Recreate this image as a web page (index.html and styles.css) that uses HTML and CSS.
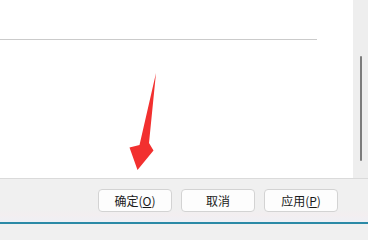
FILE: index.html
```html
<!DOCTYPE html>
<html lang="zh-CN">
<head>
<meta charset="utf-8">
<link rel="stylesheet" href="styles.css">
</head>
<body>
<div class="window">
  <div class="top">
    <div class="panel">
      <div class="rule"></div>
      <svg class="arrow" width="368" height="224" viewBox="0 0 368 224">
        <polygon points="156,73 149,143 153.5,150.5 137.5,170 129.5,147.5 139.5,145" fill="#f2302f"/>
      </svg>
    </div>
    <div class="track"><div class="thumb"></div></div>
  </div>
  <div class="footer">
    <button class="btn">确定(<u>O</u>)</button>
    <button class="btn">取消</button>
    <button class="btn">应用(<u>P</u>)</button>
  </div>
  <div class="edge"></div>
</div>
</body>
</html>
```
FILE: styles.css
```css
html, body {
  margin: 0;
  padding: 0;
  width: 368px;
  height: 224px;
  overflow: hidden;
  background: #f0f0f0;
}
.window {
  width: 368px;
  height: 224px;
  display: flex;
  flex-direction: column;
  font-family: "Noto Sans CJK SC", "Noto Sans", sans-serif;
}
.top {
  height: 178px;
  display: flex;
  border-bottom: 1px solid #dadada;
}
.panel {
  flex: 1;
  background: #ffffff;
  position: relative;
  padding-top: 39px;
}
.rule {
  width: 317px;
  height: 1px;
  background: #cbcbcb;
}
.arrow {
  position: absolute;
  left: 0;
  top: 0;
}
.track {
  width: 15px;
  background: #eeeeee;
  padding-top: 56px;
  box-sizing: border-box;
}
.thumb {
  width: 2px;
  height: 105px;
  margin-left: 7px;
  background: #7c7c7c;
  border-radius: 1px;
}
.footer {
  flex: 1;
  display: flex;
  justify-content: flex-end;
  align-items: flex-start;
  gap: 9px;
  padding: 10px 30px 0 0;
  background: linear-gradient(#f0f0f0 0, #f0f0f0 30px, #f3eef0 36px, #eef0f5 43px);
}
.btn {
  width: 74px;
  height: 23px;
  box-sizing: border-box;
  border: 1px solid #d3d3d3;
  border-radius: 4px;
  background: #fdfdfd;
  font-family: "Noto Sans CJK SC", "Noto Sans", sans-serif;
  font-size: 12px;
  color: #1a1a1a;
  padding: 0;
  line-height: 20px;
}
.btn u {
  text-underline-offset: 1px;
}
.edge {
  height: 2px;
  background: #2b8aa6;
}
```
